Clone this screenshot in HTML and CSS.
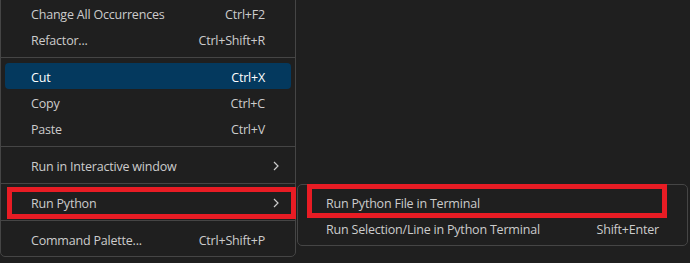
FILE: index.html
```html
<!DOCTYPE html>
<html>
<head>
    <meta charset="UTF-8">
    <title>Context Menu</title>
    <link rel="stylesheet" href="styles.css">
</head>
<body>
    <div class="stage">
        <div class="menu main-menu">
            <div class="item"><span class="label">Change All Occurrences</span><span class="keys">Ctrl+F2</span><span class="arrow"></span></div>
            <div class="item"><span class="label">Refactor...</span><span class="keys">Ctrl+Shift+R</span><span class="arrow"></span></div>
            <div class="sep"></div>
            <div class="item active"><span class="label">Cut</span><span class="keys">Ctrl+X</span><span class="arrow"></span></div>
            <div class="item"><span class="label">Copy</span><span class="keys">Ctrl+C</span><span class="arrow"></span></div>
            <div class="item"><span class="label">Paste</span><span class="keys">Ctrl+V</span><span class="arrow"></span></div>
            <div class="sep"></div>
            <div class="item"><span class="label">Run in Interactive window</span><span class="keys"></span><span class="arrow">
                <svg width="6" height="10" viewBox="0 0 6 10"><path d="M1 1l4 4-4 4" fill="none" stroke="#cccccc" stroke-width="1.2"/></svg>
            </span></div>
            <div class="sep"></div>
            <div class="item marked mark-left"><span class="label">Run Python</span><span class="keys"></span><span class="arrow">
                <svg width="6" height="10" viewBox="0 0 6 10"><path d="M1 1l4 4-4 4" fill="none" stroke="#cccccc" stroke-width="1.2"/></svg>
            </span></div>
            <div class="sep"></div>
            <div class="item"><span class="label">Command Palette...</span><span class="keys">Ctrl+Shift+P</span><span class="arrow"></span></div>
        </div>

        <div class="menu sub-menu">
            <div class="item marked mark-right"><span class="label">Run Python File in Terminal</span><span class="keys"></span></div>
            <div class="item"><span class="label">Run Selection/Line in Python Terminal</span><span class="keys">Shift+Enter</span></div>
        </div>
    </div>
</body>
</html>
```

FILE: styles.css
```css
body {
    margin: 0;
    background: #1f1f1f;
    font-family: "Open Sans", "Noto Sans", sans-serif;
    font-size: 12.5px;
    letter-spacing: -0.2px;
    color: #cccccc;
    height: 263px;
    overflow: hidden;
}

.stage {
    display: flex;
    align-items: flex-start;
}

.menu {
    background: #1f1f1f;
    border: 1px solid #454545;
    border-radius: 5px;
    padding: 4px 0;
}

.main-menu {
    width: 294px;
    margin-top: -5px;
}

.sub-menu {
    width: 389px;
    margin-top: 184px;
    margin-left: 1px;
}

.item {
    box-sizing: border-box;
    display: grid;
    grid-template-columns: 1fr auto 26px;
    align-items: center;
    height: 26px;
    margin: 0 4px;
    padding-left: 26px;
    padding-top: 2px;
    border-radius: 4px;
    white-space: nowrap;
    position: relative;
}

.sub-menu .item {
    grid-template-columns: 1fr auto;
    padding: 2px 24px 0;
}

.item.active {
    background: #04395e;
    color: #ffffff;
}

.arrow {
    display: flex;
    align-items: center;
    padding-left: 8px;
}

.sep {
    height: 1px;
    background: #454545;
    margin: 5px 0;
}

/* red annotation frames */
.marked::after {
    content: "";
    position: absolute;
    border: 5px solid #e81c24;
}

.mark-left::after {
    top: -2px;
    bottom: -4px;
    left: 2px;
    right: -5px;
}

.mark-right::after {
    top: -5px;
    bottom: -3px;
    left: 5px;
    right: 16px;
}
```
